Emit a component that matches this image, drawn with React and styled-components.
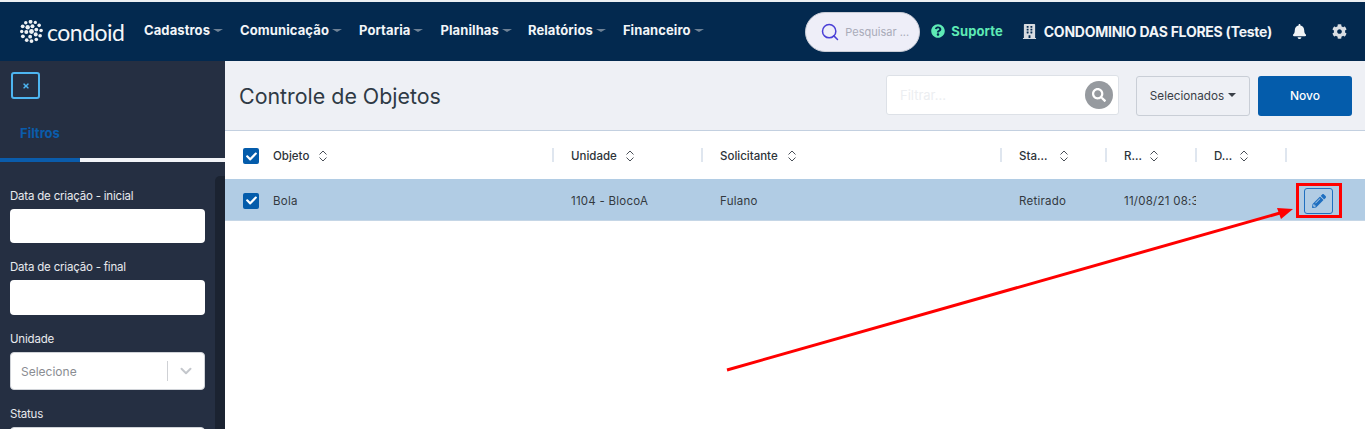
import React from "react";
import styled, { createGlobalStyle } from "styled-components";
import { FaBell, FaBuilding, FaCheck, FaCog, FaPencilAlt, FaQuestionCircle, FaSearch, FaTimes } from "react-icons/fa";
import { Search, ChevronDown } from "lucide-react";

const GlobalStyle = createGlobalStyle`
  html, body {
    margin: 0;
    height: 100%;
    overflow: hidden;
    background: #ffffff;
    font-family: "Inter", "Liberation Sans", sans-serif;
  }
  * {
    box-sizing: border-box;
  }
`;

const menus = [
  { label: "Cadastros", gap: 30 },
  { label: "Comunicação", gap: 30 },
  { label: "Portaria", gap: 30 },
  { label: "Planilhas", gap: 29 },
  { label: "Relatórios", gap: 30 },
  { label: "Financeiro", gap: 12 },
];

const columns = [
  { label: "Objeto", value: "Bola", sortGap: 9 },
  { label: "Unidade", value: "1104 - BlocoA", sortGap: 8 },
  { label: "Solicitante", value: "Fulano", sortGap: 9 },
  { label: "Sta…", value: "Retirado", sortGap: 12 },
  { label: "R…", value: "11/08/21 08:30", sortGap: 7 },
  { label: "D…", value: "", sortGap: 7 },
];

const dots = [
  [11, 1.8, 2], [16, 2.6, 1.7], [6, 2.8, 1.8], [20, 5.6, 1.9], [2.8, 6.6, 2], [22, 11, 1.9], [1.8, 12, 1.8],
  [21, 16.4, 1.9], [3, 17, 2], [17, 20.4, 1.9], [7, 21, 1.9], [12, 22, 2], [8, 7.6, 2.3], [13, 6.6, 2.1],
  [17, 10, 2], [6.6, 12.6, 2.1], [12, 12, 2.5], [16.4, 15, 2.1], [10.6, 17.4, 2],
];

const LogoMark = () => (
  <svg width="23" height="23" viewBox="0 0 24 24" fill="#eef1f4">
    {dots.map(([cx, cy, r]) => (
      <circle key={`${cx}-${cy}`} cx={cx} cy={cy} r={r} />
    ))}
  </svg>
);

const SortIcon = () => (
  <svg width="10" height="12" viewBox="0 0 10 12" fill="none" stroke="#4a5058" strokeWidth="1">
    <path d="M1.5 4.5 5 1l3.5 3.5M1.5 7.5 5 11l3.5-3.5" />
  </svg>
);

const Check = () => (
  <CheckBox>
    <FaCheck size={11} color="#ffffff" />
  </CheckBox>
);

const Field = ({ label, children, space }) => (
  <FieldWrap $space={space}>
    <FieldLabel>{label}</FieldLabel>
    {children}
  </FieldWrap>
);

const SelectBox = ({ text }) => (
  <FakeSelect>
    <SelectText>{text}</SelectText>
    <SelectArrow>
      <ChevronDown size={18} color="#c4c7cc" strokeWidth={2.6} />
    </SelectArrow>
  </FakeSelect>
);

const App = () => {
  return (
    <React.Fragment>
      <GlobalStyle />
      <Page>
        <TopBar>
          <Logo>
            <LogoMark />
            <LogoText>condoid</LogoText>
          </Logo>
          <Menu>
            {menus.map((m) => (
              <MenuItem key={m.label} $gap={m.gap}>
                {m.label}
                <Caret />
              </MenuItem>
            ))}
          </Menu>
          <TopRight>
            <SearchPill>
              <Search size={20} color="#4a3fd6" strokeWidth={1.8} />
              <PillText>Pesquisar ...</PillText>
            </SearchPill>
            <Support>
              <FaQuestionCircle size={14} color="#5eeab5" />
              Suporte
            </Support>
            <Condo>
              <FaBuilding size={15} color="#d7dbe0" />
              CONDOMINIO DAS FLORES (Teste)
            </Condo>
            <TopIcon $left={20}>
              <FaBell size={15} color="#f1f3f5" />
            </TopIcon>
            <TopIcon $left={25}>
              <FaCog size={15} color="#d9dde2" />
            </TopIcon>
          </TopRight>
        </TopBar>
        <Body>
          <Sidebar>
            <CloseButton>
              <FaTimes size={8} color="#4db5f0" />
            </CloseButton>
            <TabTitle>Filtros</TabTitle>
            <TabLine>
              <TabActive />
            </TabLine>
            <FilterArea>
              <FilterForm>
                <Field label="Data de criação - inicial">
                  <DateInput />
                </Field>
                <Field label="Data de criação - final" space={18}>
                  <DateInput $tall />
                </Field>
                <Field label="Unidade" space={18}>
                  <SelectBox text="Selecione" />
                </Field>
                <Field label="Status" space={18}>
                  <SelectBox />
                </Field>
              </FilterForm>
              <ScrollTrack />
            </FilterArea>
          </Sidebar>
          <Main>
            <Toolbar>
              <PageTitle>Controle de Objetos</PageTitle>
              <FilterBox>
                <FilterInput placeholder="Filtrar..." />
                <FilterSearch>
                  <FaSearch size={14} color="#ffffff" />
                </FilterSearch>
              </FilterBox>
              <SelectedButton>
                Selecionados
                <SmallCaret />
              </SelectedButton>
              <NewButton>Novo</NewButton>
            </Toolbar>
            <TableGrid>
              <HeadCell $first>
                <Check />
              </HeadCell>
              {columns.map((c, i) => (
                <HeadCell key={c.label} $line={i > 0}>
                  {c.label}
                  <SortSlot $gap={c.sortGap}>
                    <SortIcon />
                  </SortSlot>
                </HeadCell>
              ))}
              <HeadCell $line />
              <RowCell $first>
                <Check />
              </RowCell>
              {columns.map((c, i) => (
                <RowCell key={c.label} $pad={i > 0}>
                  {c.value}
                </RowCell>
              ))}
              <RowCell>
                <EditButton>
                  <FaPencilAlt size={14} color="#1f6fc0" />
                </EditButton>
              </RowCell>
            </TableGrid>
          </Main>
        </Body>
        <Annotation width="1365" height="429" viewBox="0 0 1365 429">
          <rect x="1297.5" y="184.5" width="43" height="32" fill="none" stroke="#ff0000" strokeWidth="3" />
          <line x1="727" y1="370" x2="1280" y2="213" stroke="#ff0000" strokeWidth="3" />
          <polygon points="1293,209 1277,208 1281,219" fill="#ff0000" />
        </Annotation>
      </Page>
    </React.Fragment>
  );
};

export default App;

const Page = styled.div`
  position: relative;
  height: 429px;
  display: flex;
  flex-direction: column;
  overflow: hidden;
  border-top: 2px solid #eceff2;
`;

const TopBar = styled.div`
  height: 59px;
  flex: none;
  display: flex;
  align-items: center;
  background: #03294f;
  padding: 0 18px 0 20px;
`;

const Logo = styled.div`
  display: flex;
  align-items: center;
  gap: 4px;
  width: 124px;
`;

const LogoText = styled.span`
  font-family: "Lato", sans-serif;
  font-weight: 400;
  font-size: 23px;
  letter-spacing: -0.5px;
  color: #f4f6f8;
`;

const Menu = styled.div`
  display: flex;
  align-items: center;
  padding-bottom: 3px;
`;

const MenuItem = styled.div`
  display: flex;
  align-items: center;
  margin-right: ${(p) => p.$gap - 13}px;
  font-size: 13px;
  font-weight: 700;
  letter-spacing: 0.1px;
  color: #f2f5f8;
`;

const Caret = styled.span`
  width: 0;
  height: 0;
  margin: 1px 0 0 3px;
  border-left: 5px solid transparent;
  border-right: 5px solid transparent;
  border-top: 3px solid #6f8296;
`;

const TopRight = styled.div`
  margin-left: auto;
  display: flex;
  align-items: center;
`;

const SearchPill = styled.div`
  width: 115px;
  height: 40px;
  display: flex;
  align-items: center;
  gap: 5px;
  padding-left: 14px;
  border-radius: 20px;
  background: #eeeef8;
  border: 1px solid #c9ccd6;
`;

const PillText = styled.span`
  font-size: 11px;
  color: #a9abb8;
  white-space: nowrap;
`;

const Support = styled.div`
  display: flex;
  align-items: center;
  gap: 6px;
  margin-left: 11px;
  padding-bottom: 1px;
  font-size: 13px;
  font-weight: 700;
  letter-spacing: 0.1px;
  color: #5eeab5;
`;

const Condo = styled.div`
  display: flex;
  align-items: center;
  gap: 7px;
  margin-left: 19px;
  padding-bottom: 1px;
  font-size: 14px;
  font-weight: 700;
  letter-spacing: -0.25px;
  color: #f2f5f8;
  white-space: nowrap;
`;

const TopIcon = styled.div`
  display: flex;
  margin-left: ${(p) => p.$left}px;
`;

const Body = styled.div`
  flex: 1;
  min-height: 0;
  display: flex;
`;

const Sidebar = styled.aside`
  width: 225px;
  flex: none;
  display: flex;
  flex-direction: column;
  background: #252f42;
  padding-top: 11px;
`;

const CloseButton = styled.div`
  width: 29px;
  height: 27px;
  margin-left: 11px;
  display: flex;
  align-items: center;
  justify-content: center;
  border: 2px solid #4db5f0;
  border-radius: 3px;
`;

const TabTitle = styled.div`
  margin: 26px 0 0 20px;
  height: 17px;
  line-height: 17px;
  font-size: 13px;
  font-weight: 700;
  color: #0a5cab;
`;

const TabLine = styled.div`
  height: 4px;
  margin-top: 16px;
  background: #f2f4f7;
`;

const TabActive = styled.div`
  width: 80px;
  height: 4px;
  background: #0a5cab;
`;

const FilterArea = styled.div`
  flex: 1;
  min-height: 0;
  display: flex;
  overflow: hidden;
  padding-top: 14px;
`;

const FilterForm = styled.div`
  width: 215px;
  flex: none;
  padding: 14px 10px 0;
`;

const ScrollTrack = styled.div`
  width: 10px;
  background: #1b2331;
  border-radius: 5px 0 0 0;
`;

const FieldWrap = styled.div`
  margin-top: ${(p) => p.$space || 0}px;
`;

const FieldLabel = styled.div`
  height: 19px;
  font-size: 11.5px;
  line-height: 13px;
  letter-spacing: -0.2px;
  color: #e8eaee;
  white-space: nowrap;
`;

const DateInput = styled.input`
  display: block;
  width: 100%;
  height: ${(p) => (p.$tall ? 35 : 34)}px;
  border: 0;
  border-radius: 4px;
  background: #ffffff;
`;

const FakeSelect = styled.div`
  display: flex;
  align-items: center;
  height: 38px;
  border: 1px solid #d0d3d8;
  border-radius: 4px;
  background: #ffffff;
`;

const SelectText = styled.span`
  flex: 1;
  padding-left: 10px;
  font-size: 12px;
  color: #8a8d92;
`;

const SelectArrow = styled.span`
  width: 37px;
  height: 20px;
  display: flex;
  align-items: center;
  justify-content: center;
  border-left: 1px solid #cfd1d5;
`;

const Main = styled.main`
  flex: 1;
  min-width: 0;
  display: flex;
  flex-direction: column;
`;

const Toolbar = styled.div`
  height: 70px;
  flex: none;
  display: flex;
  align-items: center;
  padding: 0 13px 0 14px;
  background: #eef0f5;
  border-bottom: 1px solid #c3d0e0;
`;

const PageTitle = styled.h1`
  flex: 1;
  margin: 0;
  padding-top: 1px;
  font-size: 21.4px;
  font-weight: 400;
  color: #2f3a45;
`;

const FilterBox = styled.div`
  width: 233px;
  height: 40px;
  margin: 0 17px 2px 0;
  display: flex;
  align-items: center;
  background: #ffffff;
  border: 1px solid #dde1e7;
  border-radius: 3px;
`;

const FilterInput = styled.input`
  flex: 1;
  min-width: 0;
  height: 100%;
  padding-left: 13px;
  border: 0;
  outline: 0;
  background: transparent;
  font: 13px "Inter", sans-serif;
  &::placeholder {
    color: #eceef1;
  }
`;

const FilterSearch = styled.span`
  width: 28px;
  height: 28px;
  margin-right: 5px;
  flex: none;
  display: flex;
  align-items: center;
  justify-content: center;
  border-radius: 50%;
  background: #969a9f;
`;

const SelectedButton = styled.div`
  width: 114px;
  height: 40px;
  margin-right: 8px;
  display: flex;
  align-items: center;
  justify-content: center;
  gap: 4px;
  font-size: 11.7px;
  color: #3a4048;
  background: #eef0f5;
  border: 1px solid #c9ced6;
  border-radius: 3px;
`;

const SmallCaret = styled.span`
  width: 0;
  height: 0;
  margin-top: -1px;
  border-left: 4px solid transparent;
  border-right: 4px solid transparent;
  border-top: 4px solid #3a4048;
`;

const NewButton = styled.div`
  width: 94px;
  height: 40px;
  display: flex;
  align-items: center;
  justify-content: center;
  font-size: 12px;
  font-weight: 500;
  color: #ffffff;
  background: #045cab;
  border-radius: 3px;
`;

const TableGrid = styled.div`
  display: grid;
  grid-template-columns: 48px 280px 149px 299px 105px 90px 90px 79px;
  grid-template-rows: 48px 42px;
`;

const HeadCell = styled.div`
  position: relative;
  display: flex;
  align-items: center;
  padding: 2px 0 0 ${(p) => (p.$first || p.$line ? "18px" : "0")};
  font-size: 11.5px;
  font-weight: 500;
  color: #2d3339;
  &::before {
    content: "";
    display: ${(p) => (p.$line ? "block" : "none")};
    position: absolute;
    left: -1px;
    top: 17px;
    width: 2px;
    height: 14px;
    background: #dfe6ef;
  }
`;

const SortSlot = styled.span`
  display: flex;
  margin-left: ${(p) => p.$gap}px;
`;

const RowCell = styled.div`
  display: flex;
  align-items: center;
  padding: 2px 0 0 ${(p) => (p.$first || p.$pad ? "18px" : "0")};
  overflow: hidden;
  white-space: nowrap;
  font-size: 11.5px;
  letter-spacing: 0.25px;
  color: #33393f;
  background: #b1cce4;
  border-bottom: 1px solid #c5d6e6;
`;

const CheckBox = styled.span`
  width: 16px;
  height: 16px;
  display: flex;
  align-items: center;
  justify-content: center;
  border-radius: 2px;
  background: #045cab;
`;

const EditButton = styled.div`
  width: 29px;
  height: 26px;
  margin-left: 18px;
  display: flex;
  align-items: center;
  justify-content: center;
  border: 1px solid #1f6fc0;
  border-radius: 3px;
`;

const Annotation = styled.svg`
  position: absolute;
  left: 0;
  top: -2px;
  pointer-events: none;
`;
